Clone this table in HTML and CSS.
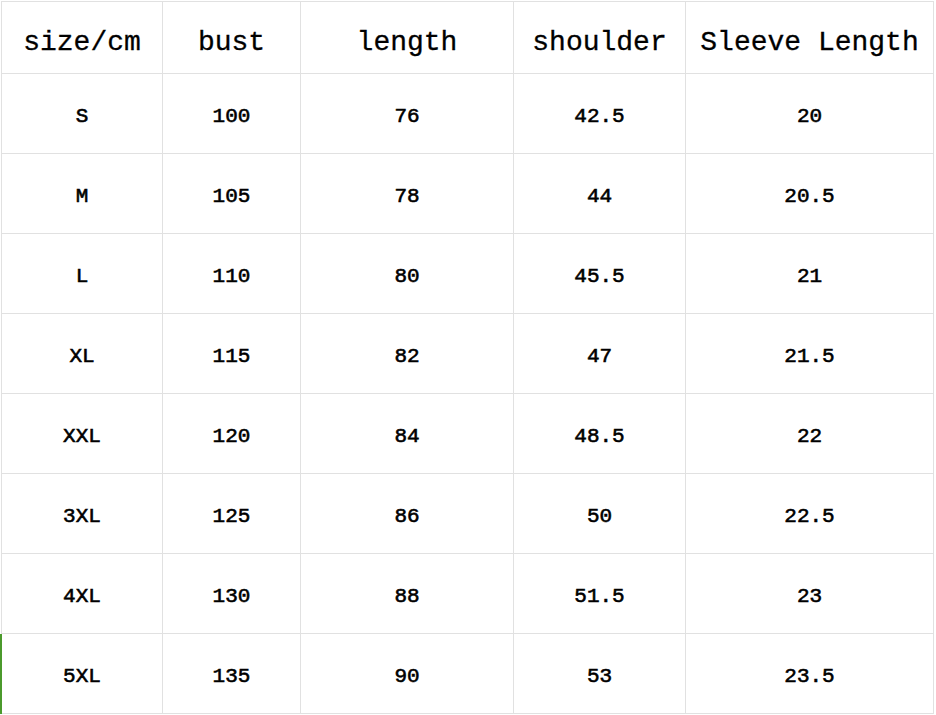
FILE: index.html
```html
<!DOCTYPE html>
<html>
<head>
<meta charset="utf-8">
<link rel="stylesheet" href="styles.css">
</head>
<body>
<div class="sheet">
  <div class="grid">
    <div class="cell head">size/cm</div>
    <div class="cell head">bust</div>
    <div class="cell head">length</div>
    <div class="cell head">shoulder</div>
    <div class="cell head">Sleeve Length</div>

    <div class="cell">S</div><div class="cell">100</div><div class="cell">76</div><div class="cell">42.5</div><div class="cell">20</div>
    <div class="cell">M</div><div class="cell">105</div><div class="cell">78</div><div class="cell">44</div><div class="cell">20.5</div>
    <div class="cell">L</div><div class="cell">110</div><div class="cell">80</div><div class="cell">45.5</div><div class="cell">21</div>
    <div class="cell">XL</div><div class="cell">115</div><div class="cell">82</div><div class="cell">47</div><div class="cell">21.5</div>
    <div class="cell">XXL</div><div class="cell">120</div><div class="cell">84</div><div class="cell">48.5</div><div class="cell">22</div>
    <div class="cell">3XL</div><div class="cell">125</div><div class="cell">86</div><div class="cell">50</div><div class="cell">22.5</div>
    <div class="cell">4XL</div><div class="cell">130</div><div class="cell">88</div><div class="cell">51.5</div><div class="cell">23</div>
    <div class="cell selected">5XL</div><div class="cell">135</div><div class="cell">90</div><div class="cell">53</div><div class="cell">23.5</div>
  </div>
</div>
</body>
</html>
```
FILE: styles.css
```css
html, body {
  margin: 0;
  padding: 0;
  background: #fff;
}
.sheet {
  padding: 1px 0 0 1px;
}
.grid {
  display: grid;
  grid-template-columns: 161px 138px 213px 172px 248px;
  grid-template-rows: 72px repeat(8, 80px);
  border-top: 1px solid #e1e1e1;
  border-left: 1px solid #e1e1e1;
  width: max-content;
  font-family: "Liberation Mono", "DejaVu Sans Mono", monospace;
  color: #000;
}
.cell {
  border-right: 1px solid #e1e1e1;
  border-bottom: 1px solid #e1e1e1;
  display: flex;
  align-items: center;
  justify-content: center;
  font-size: 21px;
  font-weight: normal;
  -webkit-text-stroke: 0.6px #000;
  padding-top: 6px;
  box-sizing: border-box;
  white-space: nowrap;
}
.cell.head {
  font-size: 28px;
  -webkit-text-stroke: 0.3px #000;
  padding-top: 10px;
}
.cell.selected {
  position: relative;
}
.cell.selected::before {
  content: "";
  position: absolute;
  left: -2px;
  top: 0;
  bottom: -1px;
  width: 2px;
  background: #4b9a2c;
}
```
